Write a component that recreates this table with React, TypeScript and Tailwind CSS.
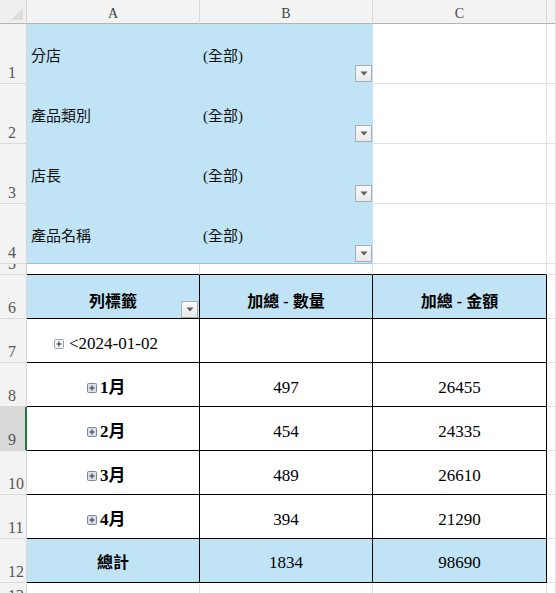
import React from "react"

const BLUE = "bg-[#c0e4f5]"
const FONT = { fontFamily: '"Liberation Serif", "Noto Sans CJK TC", serif' }

const rowHeights = [60, 60, 60, 60, 11, 44, 44, 44, 44, 44, 44, 44, 24]

function DropBtn({ className }: { className: string }) {
  return (
    <div
      className={`absolute w-[17px] h-[17px] border border-[#a7adb5] bg-gradient-to-b from-[#fafafa] to-[#e9e9e9] flex items-center justify-center ${className}`}
    >
      <svg width="8" height="5" viewBox="0 0 8 5">
        <path d="M0.5 0.5 L7.5 0.5 L4 4.5 Z" fill="#5f5f5f" />
      </svg>
    </div>
  )
}

function Expand({ light }: { light?: boolean }) {
  return (
    <svg width="10" height="10" viewBox="0 0 10 10" className="shrink-0">
      <rect
        x="0.5"
        y="0.5"
        width="9"
        height="9"
        rx="1"
        fill={light ? "#f4f5f8" : "#d9dde7"}
        stroke={light ? "#9aa0aa" : "#7d8696"}
      />
      <path d="M2.5 5 H7.5 M5 2.5 V7.5" stroke="#2b2b2b" strokeWidth="1" />
    </svg>
  )
}

const filters = ["分店", "產品類別", "店長", "產品名稱"]

const months = [
  { m: "1月", q: "497", a: "26455" },
  { m: "2月", q: "454", a: "24335" },
  { m: "3月", q: "489", a: "26610" },
  { m: "4月", q: "394", a: "21290" },
]

export default function App() {
  const cell = "relative border-r border-b overflow-hidden flex items-center"
  const grid = "border-[#e1e1e1]"
  const piv = "border-black"

  const rowCells = (r: number) => {
    // r is 1-based row index
    if (r <= 4) {
      const bottom = r === 4 ? "border-b-[#8fc3e2]" : "border-b-[#c0e4f5]"
      return [
        <div key="a" className={`${cell} ${BLUE} border-r-[#c0e4f5] ${bottom} pl-[4px] pt-[6px] text-[15px] text-[#111]`}>
          {filters[r - 1]}
        </div>,
        <div key="b" className={`${cell} ${BLUE} border-r-[#c0e4f5] ${bottom} pl-[3px] pt-[6px] text-[15px] text-[#111]`}>
          (全部)
          <DropBtn className="right-0 bottom-[1px]" />
        </div>,
        <div key="c" className={`${cell} ${grid}`} />,
      ]
    }
    if (r === 5) {
      return [
        <div key="a" className={`${cell} border-r-[#e1e1e1] border-b-black`} />,
        <div key="b" className={`${cell} border-r-[#e1e1e1] border-b-black`} />,
        <div key="c" className={`${cell} border-r-[#e1e1e1] border-b-black`} />,
      ]
    }
    if (r === 6) {
      return [
        <div key="a" className={`${cell} ${piv} ${BLUE} justify-center pt-[11px] font-bold text-[16px]`}>
          列標籤
          <DropBtn className="right-[1px] bottom-0" />
        </div>,
        <div key="b" className={`${cell} ${piv} ${BLUE} justify-center pt-[11px] font-bold text-[16px]`}>
          加總 - 數量
        </div>,
        <div key="c" className={`${cell} ${piv} ${BLUE} justify-center pt-[11px] font-bold text-[16px]`}>
          加總 - 金額
        </div>,
      ]
    }
    if (r === 7) {
      return [
        <div key="a" className={`${cell} ${piv} pl-[27px] pt-[6px] gap-[5px] text-[17px]`}>
          <Expand light />
          <span>&lt;2024-01-02</span>
        </div>,
        <div key="b" className={`${cell} ${piv}`} />,
        <div key="c" className={`${cell} ${piv}`} />,
      ]
    }
    if (r >= 8 && r <= 11) {
      const d = months[r - 8]
      return [
        <div key="a" className={`${cell} ${piv} pl-[60px] pt-[6px] gap-[3px] text-[17px] font-bold`}>
          <Expand />
          <span>{d.m}</span>
        </div>,
        <div key="b" className={`${cell} ${piv} justify-center pt-[6px] text-[17px]`}>{d.q}</div>,
        <div key="c" className={`${cell} ${piv} justify-center pt-[6px] text-[17px]`}>{d.a}</div>,
      ]
    }
    if (r === 12) {
      return [
        <div key="a" className={`${cell} ${piv} ${BLUE} justify-center pt-[4px] text-[16px] font-bold`}>總計</div>,
        <div key="b" className={`${cell} ${piv} ${BLUE} justify-center pt-[4px] text-[17px]`}>1834</div>,
        <div key="c" className={`${cell} ${piv} ${BLUE} justify-center pt-[4px] text-[17px]`}>98690</div>,
      ]
    }
    return [
      <div key="a" className={`${cell} ${grid}`} />,
      <div key="b" className={`${cell} ${grid}`} />,
      <div key="c" className={`${cell} ${grid}`} />,
    ]
  }

  return (
    <div className="w-[556px] h-[593px] overflow-hidden bg-white text-black" style={FONT}>
      <div
        className="grid"
        style={{
          gridTemplateColumns: "27px 173px 173px 174px 1fr",
          gridTemplateRows: ["24px", ...rowHeights.map((h) => `${h}px`)].join(" "),
        }}
      >
        {/* corner */}
        <div className="relative bg-[#efefef] border-r border-b border-r-[#d6d6d6] border-b-[#b4b4b4]">
          <svg width="12" height="12" viewBox="0 0 12 12" className="absolute right-[3px] bottom-[3px]">
            <path d="M12 0 L12 12 L0 12 Z" fill="#dcdcdc" />
          </svg>
        </div>
        {["A", "B", "C", ""].map((c, i) => (
          <div
            key={i}
            className="bg-[#f3f3f3] border-r border-b border-r-[#d8d8d8] border-b-[#b4b4b4] flex items-end justify-center pb-[2px] text-[14px] text-[#444] leading-none"
          >
            {c}
          </div>
        ))}

        {rowHeights.map((_, idx) => {
          const r = idx + 1
          const sel = r === 9
          return (
            <React.Fragment key={r}>
              <div
                className={`overflow-hidden flex items-end pl-[8px] pb-[2px] leading-none text-[16px] text-[#555] border-b border-b-[#d9d9d9] ${
                  sel
                    ? "bg-[#d9d9d9] border-r-2 border-r-[#217346]"
                    : "bg-[#f3f3f3] border-r border-r-[#d6d6d6]"
                }`}
              >
                {r}
              </div>
              {rowCells(r)}
              <div className="border-r border-b border-[#e1e1e1]" />
            </React.Fragment>
          )
        })}
      </div>
    </div>
  )
}
